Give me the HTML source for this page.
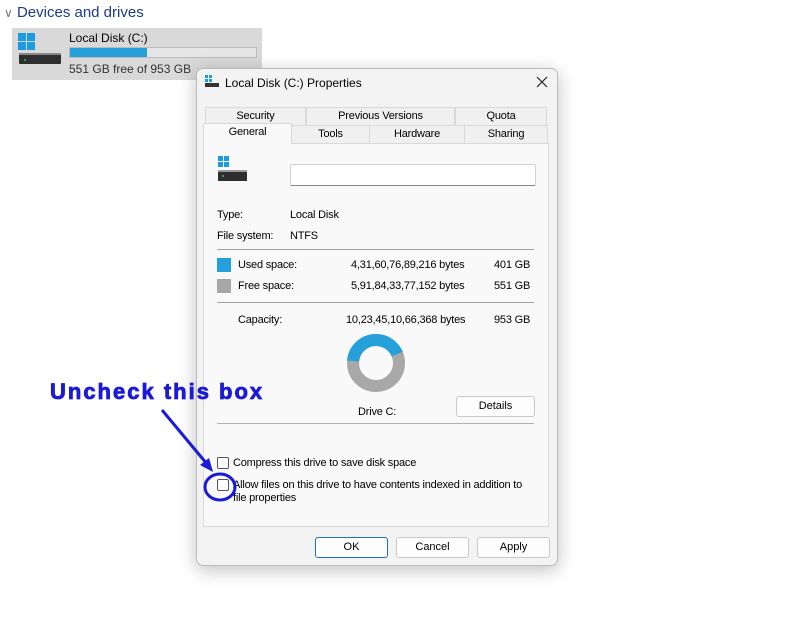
<!DOCTYPE html>
<html><head><meta charset="utf-8"><style>
*{margin:0;padding:0;box-sizing:border-box}
body{width:796px;height:628px;background:#fff;font-family:"Liberation Sans",sans-serif;position:relative;overflow:hidden;color:#000}
.a{position:absolute;white-space:nowrap}
.s{font-size:11px;letter-spacing:-0.2px}
.tab{position:absolute;border:1px solid #d9d9d9;background:#f0f0f0;font-size:11px;text-align:center;line-height:17px;letter-spacing:-0.2px}
.btn{position:absolute;border:1px solid #c9c9c9;background:#fdfdfd;border-radius:3px;font-size:11px;text-align:center;line-height:19px}
.cb{position:absolute;width:12px;height:12px;border:1px solid #555;border-radius:2px;background:#fff}
.hr{position:absolute;height:1px;background:#a0a0a0}
</style></head><body>
<div class="a" style="left:4px;top:4px;font-size:15px;color:#1c3a8c"><span style="color:#777;font-size:12px">&#8744;</span> Devices and drives</div>
<div class="a" style="left:12px;top:28px;width:250px;height:52px;background:#d9d9d9"></div>
<svg class="a" style="left:16px;top:31px" width="46" height="38"><rect x="2" y="2" width="8" height="8" fill="#1d9be0"/><rect x="11" y="2" width="8" height="8" fill="#1d9be0"/><rect x="2" y="11" width="8" height="8" fill="#1d9be0"/><rect x="11" y="11" width="8" height="8" fill="#1d9be0"/><rect x="3" y="22" width="42" height="11" rx="1" fill="#2e2e2e"/><rect x="3" y="22" width="42" height="2" fill="#888"/><circle cx="9" cy="29" r="1" fill="#3c3"/></svg>
<div class="a" style="left:69px;top:31px;font-size:12px">Local Disk (C:)</div>
<div class="a" style="left:69px;top:47px;width:188px;height:11px;background:#e6e6e6;border:1px solid #bcbcbc"><div style="width:77px;height:9px;background:#26a0da"></div></div>
<div class="a" style="left:69px;top:62px;font-size:12px;color:#333">551 GB free of 953 GB</div>

<div class="a" style="left:196px;top:68px;width:362px;height:498px;background:#f3f3f3;border:1px solid #bbb;border-radius:7px;box-shadow:0 4px 18px rgba(0,0,0,.25)"></div>
<svg class="a" style="left:204px;top:74px" width="16" height="14"><rect x="1" y="1" width="3" height="3" fill="#1d9be0"/><rect x="5" y="1" width="3" height="3" fill="#1d9be0"/><rect x="1" y="5" width="3" height="3" fill="#1d9be0"/><rect x="5" y="5" width="3" height="3" fill="#1d9be0"/><rect x="1" y="9" width="14" height="4" fill="#333"/></svg>
<div class="a" style="left:225px;top:76px;font-size:12px">Local Disk (C:) Properties</div>
<svg class="a" style="left:536px;top:76px" width="12" height="12"><path d="M1 1L11 11M11 1L1 11" stroke="#222" stroke-width="1.2"/></svg>

<div class="tab" style="left:205px;top:107px;width:101px;height:19px">Security</div>
<div class="tab" style="left:306px;top:107px;width:149px;height:19px">Previous Versions</div>
<div class="tab" style="left:455px;top:107px;width:92px;height:19px">Quota</div>
<div class="a" style="left:203px;top:143px;width:346px;height:384px;background:#f9f9f9;border:1px solid #d9d9d9"></div>
<div class="tab" style="left:291px;top:125px;width:79px;height:19px">Tools</div>
<div class="tab" style="left:369px;top:125px;width:96px;height:19px">Hardware</div>
<div class="tab" style="left:464px;top:125px;width:84px;height:19px">Sharing</div>
<div class="tab" style="left:203px;top:123px;width:89px;height:21px;background:#f9f9f9;border-bottom:none">General</div>

<svg class="a" style="left:217px;top:155px" width="32" height="28"><rect x="1" y="1" width="5" height="5" fill="#1d9be0"/><rect x="7" y="1" width="5" height="5" fill="#1d9be0"/><rect x="1" y="7" width="5" height="5" fill="#1d9be0"/><rect x="7" y="7" width="5" height="5" fill="#1d9be0"/><rect x="1" y="15" width="29" height="11" fill="#2e2e2e"/><rect x="1" y="15" width="29" height="2" fill="#999"/><circle cx="6" cy="21" r="1" fill="#3c3"/></svg>
<div class="a" style="left:290px;top:164px;width:246px;height:22px;background:#fff;border:1px solid #d0d0d0;border-bottom-color:#888;border-radius:2px"></div>

<div class="a s" style="left:217px;top:209px">Type:</div><div class="a s" style="left:290px;top:209px">Local Disk</div>
<div class="a s" style="left:217px;top:230px">File system:</div><div class="a s" style="left:290px;top:230px">NTFS</div>
<div class="hr" style="left:217px;top:249px;width:317px"></div>
<div class="a" style="left:217px;top:258px;width:14px;height:14px;background:#26a0da"></div>
<div class="a s" style="left:238px;top:259px">Used space:</div><div class="a s" style="left:351px;top:259px">4,31,60,76,89,216 bytes</div><div class="a s" style="left:494px;top:259px">401 GB</div>
<div class="a" style="left:217px;top:279px;width:14px;height:14px;background:#a7a7a7"></div>
<div class="a s" style="left:238px;top:280px">Free space:</div><div class="a s" style="left:351px;top:280px">5,91,84,33,77,152 bytes</div><div class="a s" style="left:494px;top:280px">551 GB</div>
<div class="hr" style="left:217px;top:302px;width:317px"></div>
<div class="a s" style="left:238px;top:314px">Capacity:</div><div class="a s" style="left:346px;top:314px">10,23,45,10,66,368 bytes</div><div class="a s" style="left:494px;top:314px">953 GB</div>
<svg class="a" style="left:346px;top:333px" width="60" height="60"><circle cx="30" cy="30" r="23" fill="none" stroke="#a8a8a8" stroke-width="12"/><circle cx="30" cy="30" r="23" fill="none" stroke="#26a0da" stroke-width="12" stroke-dasharray="61 200" transform="rotate(-175 30 30)"/></svg>
<div class="a s" style="left:358px;top:406px">Drive C:</div>
<div class="btn" style="left:456px;top:396px;width:79px;height:21px">Details</div>
<div class="hr" style="left:217px;top:423px;width:317px;background:#b0b0b0"></div>
<div class="cb" style="left:217px;top:457px"></div><div class="a s" style="left:233px;top:457px">Compress this drive to save disk space</div>
<div class="cb" style="left:217px;top:479px"></div><div class="a s" style="left:233px;top:479px;line-height:13px">Allow files on this drive to have contents indexed in addition to<br>file properties</div>

<div class="btn" style="left:315px;top:537px;width:73px;height:21px;border:1px solid #1e6fb6">OK</div>
<div class="btn" style="left:396px;top:537px;width:73px;height:21px">Cancel</div>
<div class="btn" style="left:477px;top:537px;width:73px;height:21px">Apply</div>

<div class="a" style="left:50px;top:379px;font-size:22px;font-weight:bold;color:#1a1ad8;letter-spacing:2px;-webkit-text-stroke:0.8px #1a1ad8">Uncheck this box</div>
<svg class="a" style="left:0;top:0" width="796" height="628"><line x1="162" y1="410" x2="207" y2="464" stroke="#1a1ad8" stroke-width="3"/><polygon points="213,472 200,465 209,458" fill="#1a1ad8"/><ellipse cx="220" cy="487" rx="15" ry="13" fill="none" stroke="#1a1ad8" stroke-width="3"/></svg>
</body></html>
